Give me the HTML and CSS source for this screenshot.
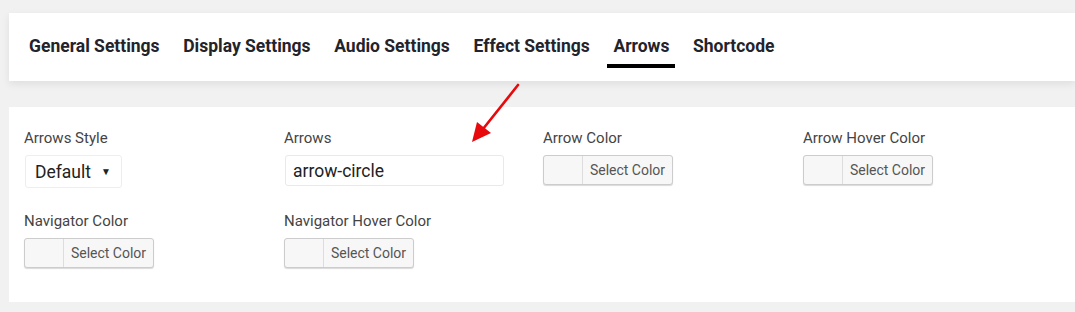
FILE: index.html
```html
<!DOCTYPE html>
<html lang="en">
<head>
  <meta charset="UTF-8">
  <title>Arrows Settings</title>
  <link rel="stylesheet" href="styles.css">
</head>
<body>
  <div class="tabs">
    <a class="tab">General Settings</a>
    <a class="tab">Display Settings</a>
    <a class="tab">Audio Settings</a>
    <a class="tab">Effect Settings</a>
    <a class="tab active">Arrows</a>
    <a class="tab">Shortcode</a>
  </div>

  <div class="panel">
    <div class="field">
      <label>Arrows Style</label>
      <div class="select">Default <span class="caret">&#9660;</span></div>
    </div>
    <div class="field">
      <label>Arrows</label>
      <input class="text" type="text" value="arrow-circle">
    </div>
    <div class="field">
      <label>Arrow Color</label>
      <button class="color"><span class="swatch"></span><span class="pick">Select Color</span></button>
    </div>
    <div class="field">
      <label>Arrow Hover Color</label>
      <button class="color"><span class="swatch"></span><span class="pick">Select Color</span></button>
    </div>
    <div class="field">
      <label>Navigator Color</label>
      <button class="color"><span class="swatch"></span><span class="pick">Select Color</span></button>
    </div>
    <div class="field">
      <label>Navigator Hover Color</label>
      <button class="color"><span class="swatch"></span><span class="pick">Select Color</span></button>
    </div>
  </div>

  <svg class="pointer" width="60" height="70" viewBox="0 0 60 70">
    <line x1="52" y1="8" x2="17" y2="52" stroke="#e8090c" stroke-width="2.6" stroke-linecap="round"/>
    <polygon points="6,65 11,45 25,56" fill="#e8090c"/>
  </svg>
</body>
</html>
```

FILE: styles.css
```css
body {
  margin: 0;
  background: #f1f1f1;
  font-family: Roboto, Arial, sans-serif;
  position: relative;
  height: 312px;
  overflow: hidden;
}
.tabs {
  margin: 13px 0 0 9px;
  height: 68px;
  background: #fff;
  display: flex;
  align-items: center;
  gap: 23.6px;
  padding-left: 20px;
  box-sizing: border-box;
  padding-bottom: 3px;
  box-shadow: 0 3px 8px rgba(0, 0, 0, 0.08);
}
.tab {
  font-size: 17.5px;
  font-weight: 700;
  color: #23232b;
  position: relative;
}
.tab.active::after {
  content: "";
  position: absolute;
  left: -6px;
  right: -6px;
  top: 28px;
  height: 4px;
  background: #000;
}
.panel {
  margin: 26px 0 0 9px;
  height: 195px;
  background: #fff;
  display: grid;
  grid-template-columns: 260px 259px 260px 260px;
  grid-auto-rows: 83px;
  padding: 22px 0 0 15px;
  box-sizing: border-box;
}
.field label {
  display: block;
  font-size: 15px;
  color: #444;
  line-height: 19px;
  margin-bottom: 7px;
}
.select {
  display: inline-flex;
  align-items: center;
  height: 33px;
  box-sizing: border-box;
  padding: 0 10px 0 9px;
  margin-left: 1px;
  border: 1px solid #eee;
  border-radius: 3px;
  font-size: 17.5px;
  color: #222;
  width: 97px;
  justify-content: space-between;
}
.caret {
  font-size: 10px;
  color: #222;
}
.text {
  display: block;
  width: 219px;
  height: 31px;
  box-sizing: border-box;
  margin: 1px 0 0 1px;
  border: 1px solid #e9e9e9;
  border-radius: 3px;
  padding: 0 7px;
  font-family: Roboto, Arial, sans-serif;
  font-size: 17.5px;
  color: #222;
}
.color {
  display: flex;
  align-items: stretch;
  height: 30px;
  width: 130px;
  padding: 0;
  border: 1px solid #ccc;
  border-radius: 3px;
  background: #f7f7f7;
  box-shadow: 0 1px 1px rgba(0, 0, 0, 0.15);
  font-family: Roboto, Arial, sans-serif;
  cursor: pointer;
}
.swatch {
  width: 38px;
  border-right: 1px solid #ddd;
}
.pick {
  flex: 1;
  display: flex;
  align-items: center;
  justify-content: center;
  font-size: 14px;
  color: #555;
}
.pointer {
  position: absolute;
  left: 466px;
  top: 77px;
}
```
